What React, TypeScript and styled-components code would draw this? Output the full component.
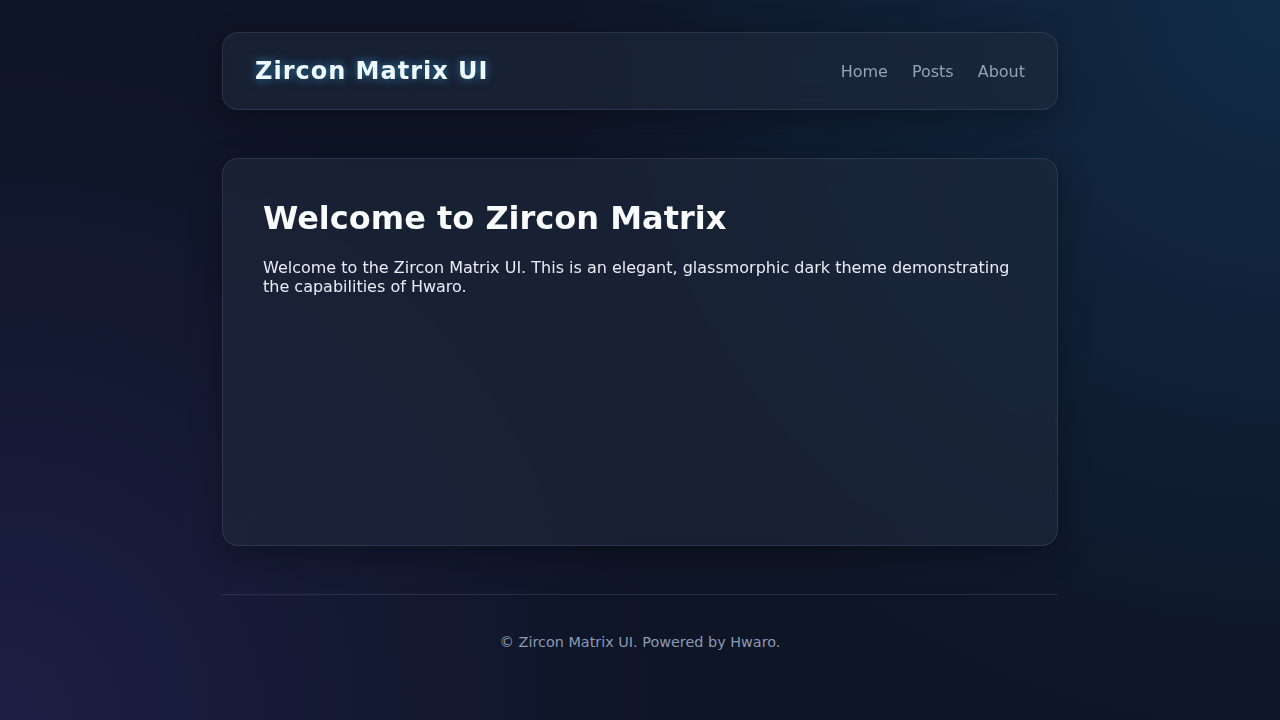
import React from "react";
import styled, { createGlobalStyle } from "styled-components";

const GlobalStyle = createGlobalStyle`
  html, body {
    margin: 0;
    padding: 0;
  }
  body {
    min-height: 100vh;
    font-family: "DejaVu Sans", "Noto Sans", sans-serif;
    color: #f1f5f9;
    background-color: #0f172a;
    background-image:
      radial-gradient(circle at 100% 0%, rgba(24, 92, 140, 0.32) 0%, rgba(24, 92, 140, 0) 50%),
      radial-gradient(circle at 0% 100%, rgba(76, 64, 170, 0.22) 0%, rgba(76, 64, 170, 0) 45%),
      linear-gradient(#0e1526, #0e1526);
    background-attachment: fixed;
  }
  * {
    box-sizing: border-box;
  }
`;

const Page = styled.div`
  width: 836px;
  margin: 0 auto;
  padding-top: 32px;
`;

const glass = `
  background: rgba(30, 41, 59, 0.62);
  border: 1px solid rgba(148, 163, 184, 0.16);
  box-shadow: 0 8px 32px rgba(0, 0, 0, 0.3);
  backdrop-filter: blur(12px);
`;

const Header = styled.header`
  ${glass}
  border-radius: 16px;
  padding: 24px 32px;
  display: flex;
  align-items: center;
  justify-content: space-between;
`;

const Brand = styled.a`
  font-size: 24px;
  font-weight: 700;
  letter-spacing: 1px;
  color: #f0f9ff;
  text-decoration: none;
  text-shadow: 0 0 10px rgba(56, 189, 248, 0.6);
`;

const Nav = styled.nav`
  display: flex;
  gap: 24px;
  padding-top: 1px;
`;

const NavLink = styled.a`
  font-size: 16px;
  color: #94a3b8;
  text-decoration: none;
`;

const Card = styled.main`
  ${glass}
  margin-top: 48px;
  border-radius: 16px;
  padding: 40px;
  min-height: 388px;
`;

const Title = styled.h1`
  margin: 0 0 21px;
  font-size: 32px;
  font-weight: 700;
  color: #f8fafc;
`;

const Lead = styled.p`
  margin: 0;
  font-size: 16px;
  line-height: 19px;
  color: #e8edf4;
`;

const Footer = styled.footer`
  margin-top: 48px;
  border-top: 1px solid rgba(148, 163, 184, 0.16);
  padding: 39px 0 37px;
  text-align: center;
  font-size: 14.4px;
  color: #8b9bb4;
`;

export default function App() {
  return (
    <>
      <GlobalStyle />
      <Page>
        <Header>
          <Brand href="#">Zircon Matrix UI</Brand>
          <Nav>
            <NavLink href="#">Home</NavLink>
            <NavLink href="#">Posts</NavLink>
            <NavLink href="#">About</NavLink>
          </Nav>
        </Header>
        <Card>
          <Title>Welcome to Zircon Matrix</Title>
          <Lead>
            Welcome to the Zircon Matrix UI. This is an elegant, glassmorphic dark theme
            demonstrating the capabilities of Hwaro.
          </Lead>
        </Card>
        <Footer>© Zircon Matrix UI. Powered by Hwaro.</Footer>
      </Page>
    </>
  );
}
